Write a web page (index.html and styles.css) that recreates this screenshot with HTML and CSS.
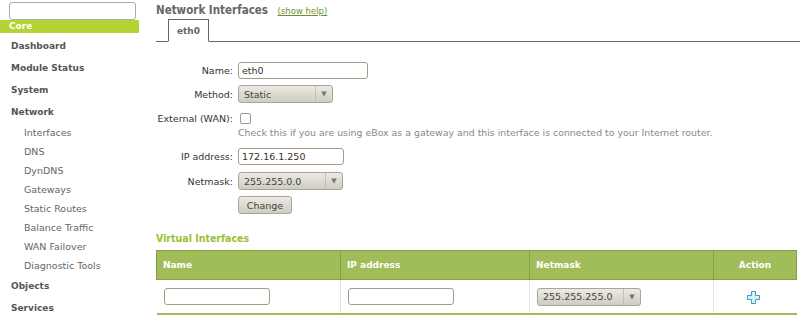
FILE: index.html
```html
<!DOCTYPE html>
<html lang="en">
<head>
    <meta charset="UTF-8">
    <title>Network Interfaces</title>
    <link rel="stylesheet" href="styles.css">
</head>
<body>
    <div id="menu">
        <input type="text" class="search">
        <div class="section">Core</div>
        <ul>
            <li class="top">Dashboard</li>
            <li class="top">Module Status</li>
            <li class="top">System</li>
            <li class="top">Network</li>
            <li class="sub">Interfaces</li>
            <li class="sub">DNS</li>
            <li class="sub">DynDNS</li>
            <li class="sub">Gateways</li>
            <li class="sub">Static Routes</li>
            <li class="sub">Balance Traffic</li>
            <li class="sub">WAN Failover</li>
            <li class="sub">Diagnostic Tools</li>
            <li class="top">Objects</li>
            <li class="top">Services</li>
        </ul>
    </div>
    <div id="content">
        <h1>Network Interfaces <a href="#">(show help)</a></h1>
        <div class="tabs"><span class="tab">eth0</span></div>

        <div class="form">
            <label>Name:</label>
            <div><input type="text" class="txt name" value="eth0"></div>

            <label>Method:</label>
            <div><span class="sel method"><span>Static</span><i>&#9660;</i></span></div>

            <label>External (WAN):</label>
            <div><span class="check"></span></div>

            <span></span>
            <div class="help">Check this if you are using eBox as a gateway and this interface is connected to your Internet router.</div>

            <label>IP address:</label>
            <div><input type="text" class="txt ip" value="172.16.1.250"></div>

            <label class="tall">Netmask:</label>
            <div class="tall"><span class="sel mask"><span>255.255.0.0</span><i>&#9660;</i></span></div>

            <span></span>
            <div class="btnrow"><button>Change</button></div>
        </div>

        <h2>Virtual Interfaces</h2>
        <table class="virt">
            <tr>
                <th class="c1">Name</th>
                <th class="c2">IP address</th>
                <th class="c3">Netmask</th>
                <th class="c4">Action</th>
            </tr>
            <tr>
                <td><input type="text" class="txt cell"></td>
                <td><input type="text" class="txt cell"></td>
                <td><span class="sel vmask"><span>255.255.255.0</span><i>&#9660;</i></span></td>
                <td class="act">
                    <svg width="13" height="13" viewBox="0 0 13 13">
                        <path d="M4.5 0.5 H8.5 V4.5 H12.5 V8.5 H8.5 V12.5 H4.5 V8.5 H0.5 V4.5 H4.5 Z" fill="#d8f0f8" stroke="#3d9cc4" stroke-width="1" stroke-linejoin="round"/>
                    </svg>
                </td>
            </tr>
        </table>
    </div>
</body>
</html>
```

FILE: styles.css
```css
body {
    margin: 0;
    display: flex;
    font-family: "DejaVu Sans", sans-serif;
    color: #555;
    background: #fff;
}

#menu {
    width: 139px;
    flex-shrink: 0;
    padding-top: 2px;
}

.search {
    display: block;
    box-sizing: border-box;
    width: 127px;
    height: 18px;
    margin: 0 0 0 9px;
    border: 1px solid #aaa;
    border-radius: 3px;
}

.section {
    background-color: #b4d334;
    color: #fff;
    font-weight: bold;
    font-size: 9px;
    height: 13px;
    line-height: 13px;
    padding-left: 9px;
}

#menu ul {
    list-style: none;
    margin: 0;
    padding: 0;
}

#menu li.top {
    font-weight: bold;
    font-size: 9px;
    height: 22px;
    line-height: 22px;
    padding-left: 11px;
    color: #555;
}

#menu li.top:first-child {
    margin-top: 2px;
}

#menu li.sub {
    font-size: 9.5px;
    height: 19px;
    line-height: 19px;
    padding-left: 24px;
    color: #666;
}

#content {
    flex: 1;
    padding-left: 17px;
    padding-right: 4px;
}

h1 {
    font-family: "DejaVu Sans Condensed", "DejaVu Sans", sans-serif;
    font-size: 11.5px;
    font-weight: bold;
    color: #666;
    margin: 3px 0 0 0;
    height: 16px;
}

h1 a {
    font-family: "DejaVu Sans", sans-serif;
    font-size: 8.5px;
    font-weight: normal;
    color: #6d8f2c;
    margin-left: 6px;
}

.tabs {
    border-bottom: 1px solid #666;
    height: 22px;
    margin-right: -4px;
    padding-left: 12px;
}

.tab {
    display: inline-block;
    box-sizing: border-box;
    height: 23px;
    width: 41px;
    border: 1px solid #666;
    border-bottom: 1px solid #fff;
    background: #fff;
    font-size: 9px;
    font-weight: bold;
    text-align: center;
    line-height: 22px;
    color: #666;
}

.form {
    display: grid;
    grid-template-columns: 77px 1fr;
    column-gap: 5px;
    margin-top: 16px;
    font-size: 9.5px;
    align-items: center;
}

.form label {
    display: flex;
    justify-content: flex-end;
    align-items: center;
    white-space: nowrap;
    color: #333;
    height: 24px;
}

.form > div {
    height: 24px;
    display: flex;
    align-items: center;
}

.form > .tall {
    height: 26px;
}

.form > div.btnrow {
    height: 22px;
}

.form > div.help {
    height: 14px;
    color: #888;
    font-size: 9.4px;
    white-space: nowrap;
    margin-top: -5px;
    margin-bottom: 5px;
}

.txt {
    box-sizing: border-box;
    height: 17px;
    border: 1px solid #a89a86;
    border-radius: 3px;
    font-family: "DejaVu Sans", sans-serif;
    font-size: 9.5px;
    color: #333;
    padding: 1px 3px;
}

.name {
    width: 130px;
}

.ip {
    width: 106px;
}

.sel {
    display: inline-flex;
    box-sizing: border-box;
    height: 18px;
    border: 1px solid #aaa59a;
    border-radius: 3px;
    background: linear-gradient(#eceae2, #cfccc0);
    font-size: 9.5px;
    color: #444;
    align-items: center;
}

.sel span {
    flex: 1;
    padding-left: 5px;
}

.sel i {
    font-style: normal;
    font-size: 7px;
    color: #777;
    width: 16px;
    height: 100%;
    border-left: 1px solid #c3bfb2;
    display: flex;
    align-items: center;
    justify-content: center;
}

.method {
    width: 95px;
}

.mask {
    width: 105px;
}

.check {
    display: inline-block;
    width: 9px;
    height: 9px;
    border: 1px solid #999;
    border-radius: 2px;
    margin-left: 2px;
}

button {
    box-sizing: border-box;
    height: 18px;
    width: 54px;
    border: 1px solid #aaa59a;
    border-radius: 3px;
    background: linear-gradient(#eceae2, #cfccc0);
    font-family: "DejaVu Sans", sans-serif;
    font-size: 9.5px;
    color: #444;
    padding: 0;
}

h2 {
    font-family: "DejaVu Sans Condensed", "DejaVu Sans", sans-serif;
    font-size: 10.5px;
    font-weight: bold;
    color: #9cbf33;
    margin: 16px 0 0 0;
    height: 14px;
}

table.virt {
    width: 641px;
    border-collapse: collapse;
    margin-top: 4px;
    font-size: 9px;
}

.virt th {
    background-color: #a1bd5a;
    color: #fff;
    font-weight: bold;
    text-align: left;
    height: 28px;
    padding: 0 0 0 6px;
    border: 1px solid #85a241;
}

.virt th.c4 {
    text-align: center;
    padding: 0;
}

.c1 { width: 177px; }
.c2 { width: 182px; }
.c3 { width: 177px; }

.virt td {
    height: 29px;
    padding: 0 0 0 7px;
    border-left: 1px solid #e4e4e4;
    border-bottom: 2px solid #a1bd5a;
}

.virt td:first-child {
    border-left: none;
}

.virt td.act {
    text-align: center;
    padding: 4px 3px 0 0;
}

.cell {
    width: 106px;
}

.vmask {
    width: 104px;
}
```
